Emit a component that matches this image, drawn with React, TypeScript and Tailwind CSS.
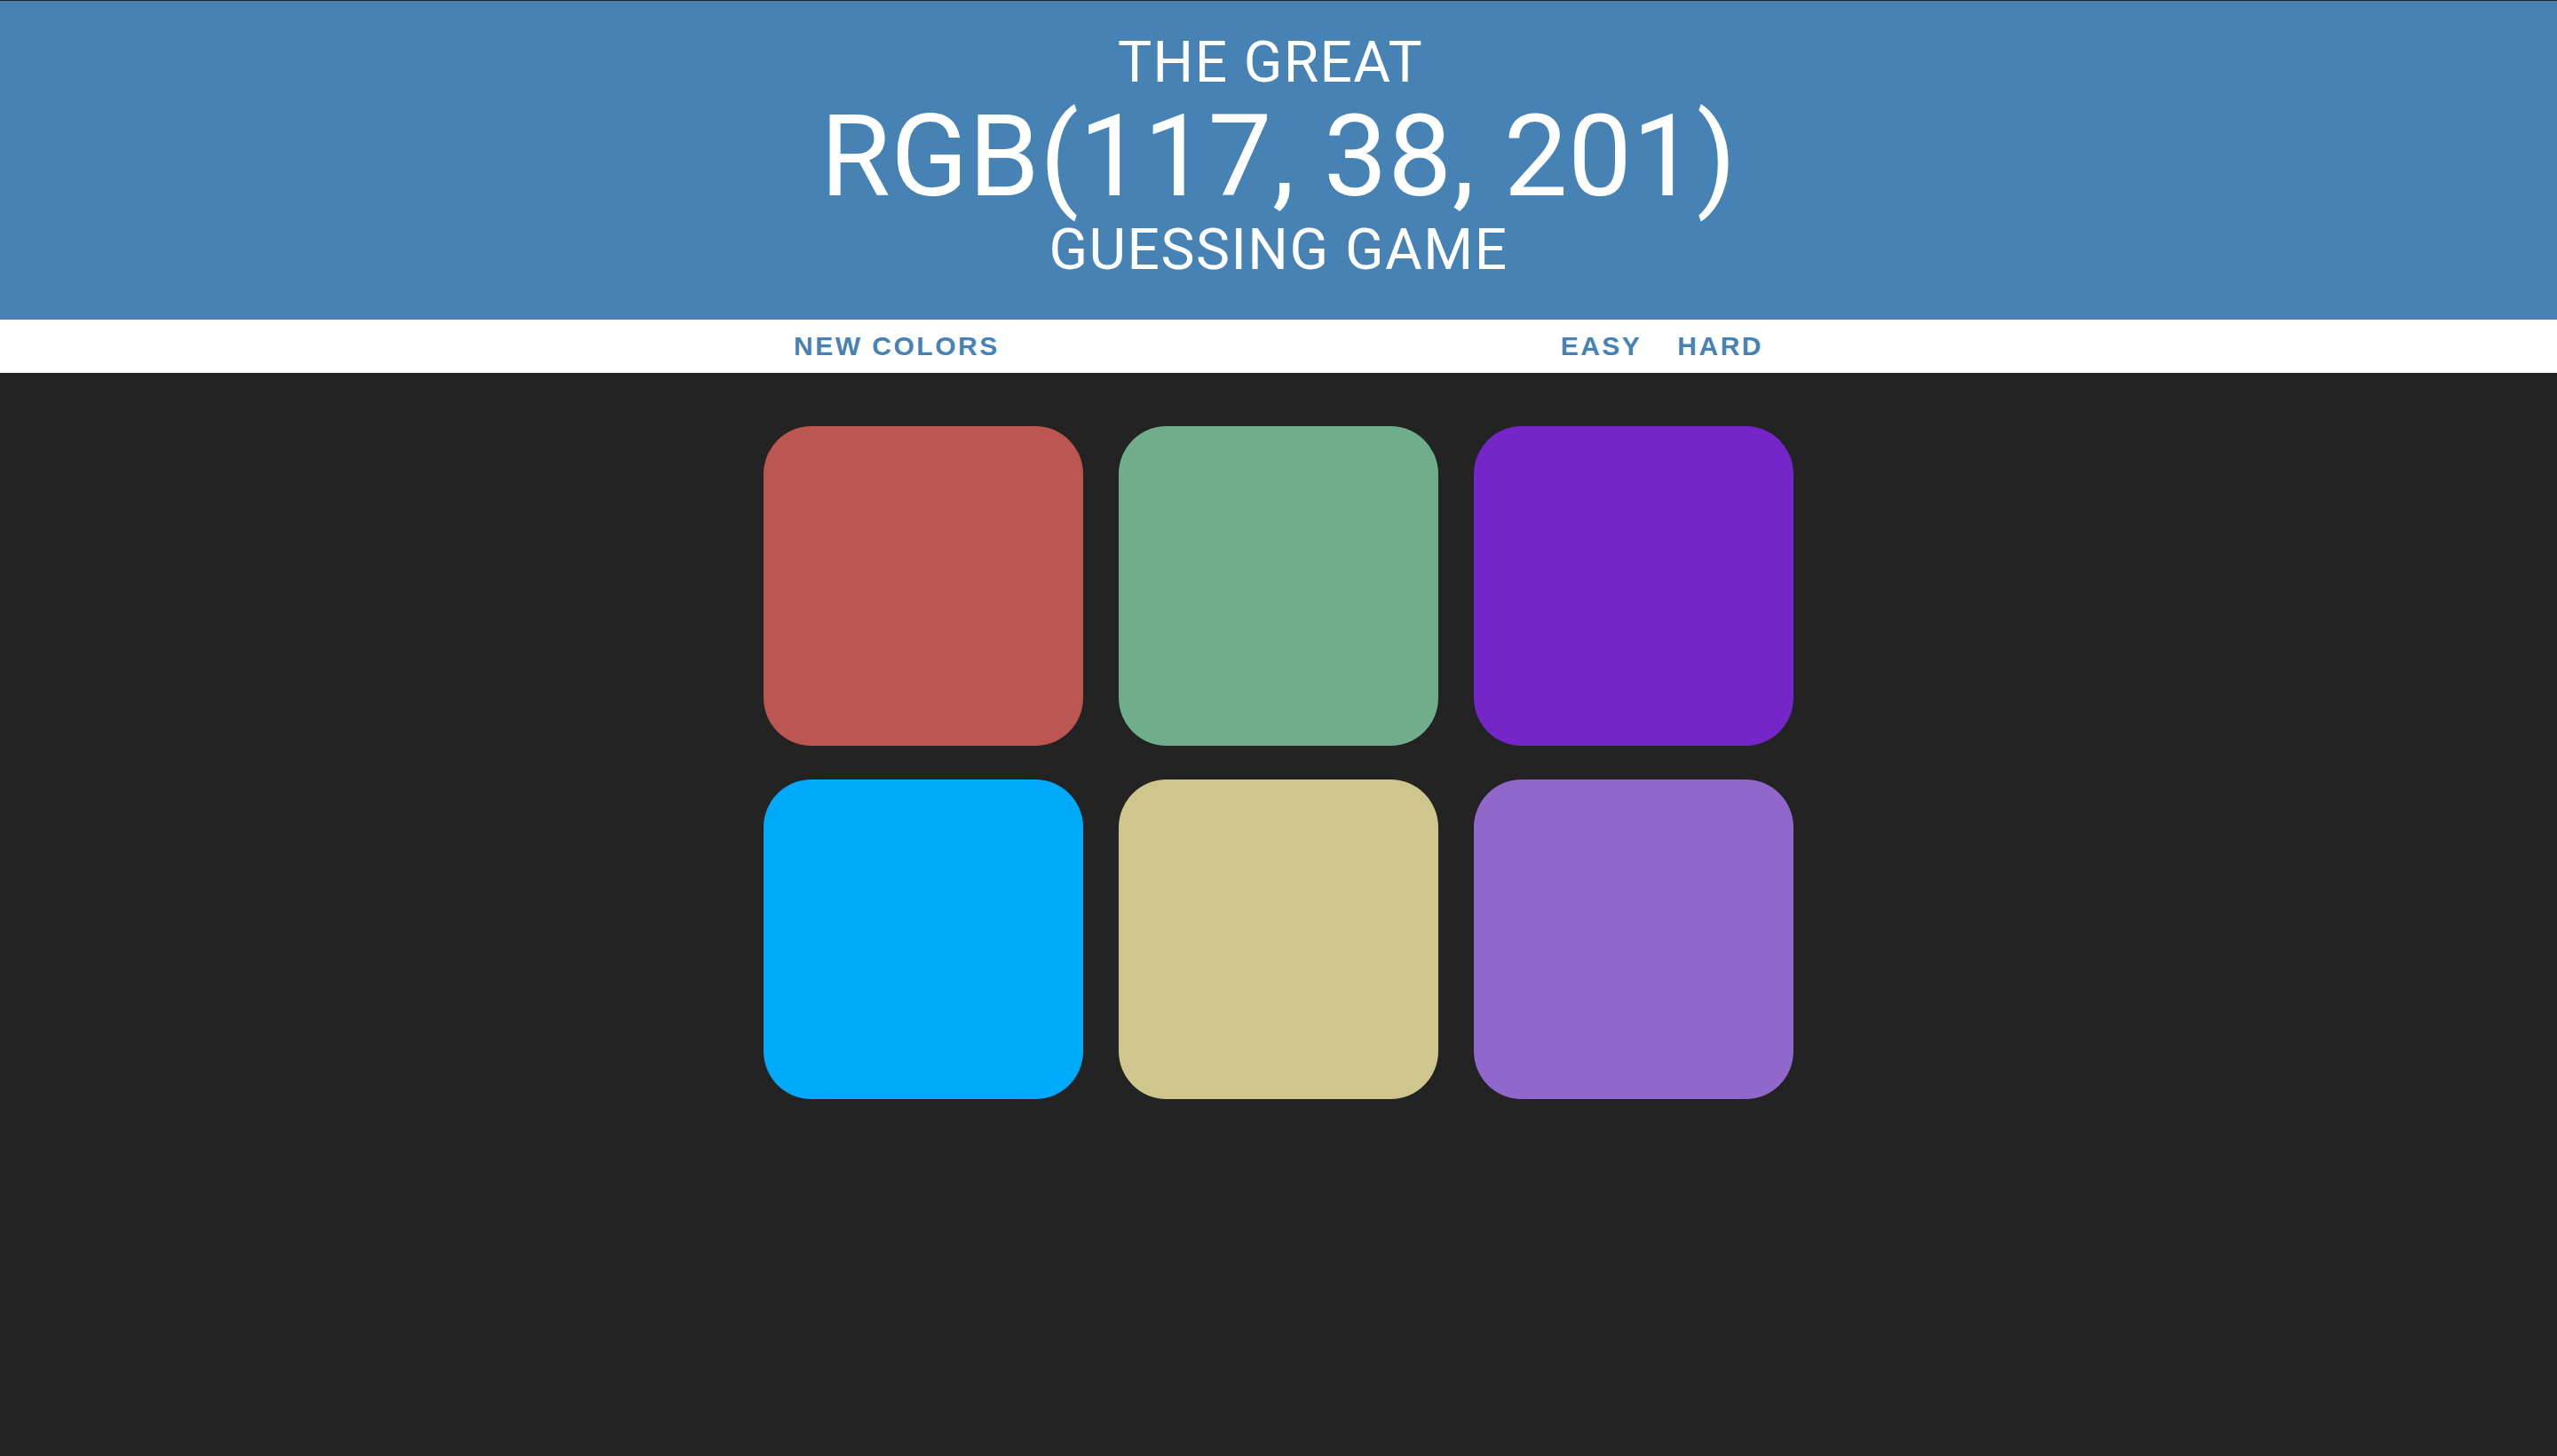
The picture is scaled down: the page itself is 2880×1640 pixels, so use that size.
const squares = ["#bb5651", "#70ad8a", "#7526c9", "#00aafb", "#cfc68e", "#9267cc"];

const ColorGame = () => {
  return (
    <div className="min-h-screen bg-[#232323] font-['Roboto',sans-serif]">
      <h1 className="h-[360px] border-t border-[#232323] bg-[#4682b4] pt-[35px] text-center font-normal uppercase leading-[1.1] text-white">
        <span className="block pr-[18px] text-[64px] tracking-[1.4px]">The Great</span>
        <span className="block text-[128px] tracking-[0.5px]">RGB(117, 38, 201)</span>
        <span className="block text-[64px] tracking-[1.5px]">Guessing Game</span>
      </h1>

      <div className="h-[60px] bg-white">
        <div className="mx-auto flex h-full w-[1092px] items-center justify-between font-['Liberation_Sans',Arial,sans-serif] text-[30px] font-bold tracking-[2.5px] text-[#4682b4]">
          <button className="uppercase leading-[60px]">New Colors</button>
          <div className="flex gap-[40px]">
            <button className="uppercase leading-[60px]">Easy</button>
            <button className="uppercase leading-[60px]">Hard</button>
          </div>
        </div>
      </div>

      <div className="mx-auto grid w-[1200px] grid-cols-[repeat(3,360px)] gap-x-[40px] gap-y-[38px] px-[20px] pt-[60px]">
        {squares.map((color, i) => (
          <div
            key={i}
            className="h-[360px] w-[360px] rounded-[54px]"
            style={{ backgroundColor: color }}
          />
        ))}
      </div>
    </div>
  );
};

export default function App() {
  return <ColorGame />;
}
